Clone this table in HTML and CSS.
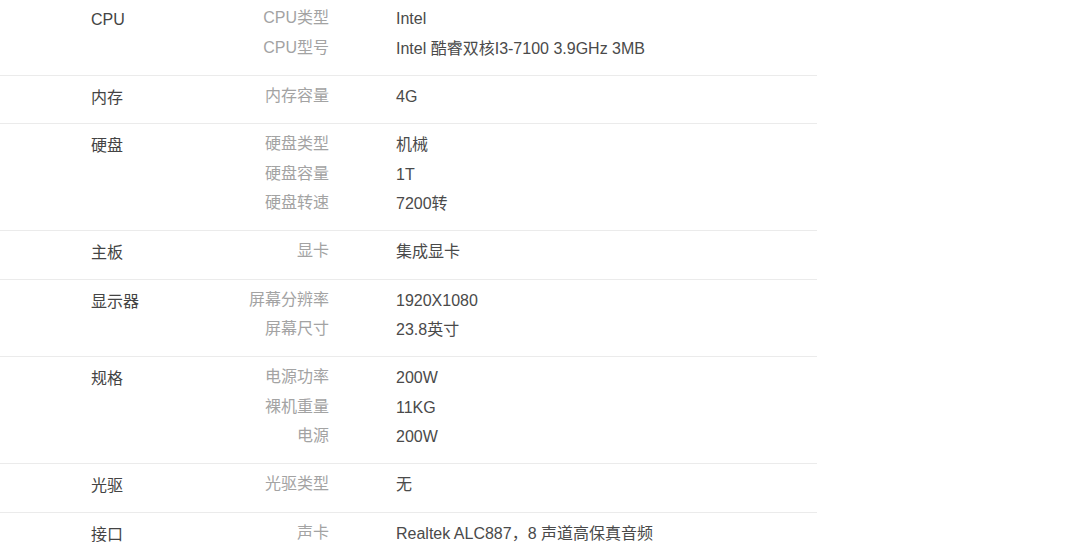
FILE: index.html
```html
<!DOCTYPE html>
<html lang="zh-CN">
<head>
<meta charset="utf-8">
<title>规格参数</title>
<link rel="stylesheet" href="styles.css">
</head>
<body>
<div class="specs">
  <section class="group">
    <div class="name">CPU</div>
    <div class="label">CPU类型</div><div class="value">Intel</div>
    <div class="label">CPU型号</div><div class="value">Intel 酷睿双核I3-7100 3.9GHz 3MB</div>
  </section>
  <section class="group">
    <div class="name">内存</div>
    <div class="label">内存容量</div><div class="value">4G</div>
  </section>
  <section class="group">
    <div class="name">硬盘</div>
    <div class="label">硬盘类型</div><div class="value">机械</div>
    <div class="label">硬盘容量</div><div class="value">1T</div>
    <div class="label">硬盘转速</div><div class="value">7200转</div>
  </section>
  <section class="group">
    <div class="name">主板</div>
    <div class="label">显卡</div><div class="value">集成显卡</div>
  </section>
  <section class="group">
    <div class="name">显示器</div>
    <div class="label">屏幕分辨率</div><div class="value">1920X1080</div>
    <div class="label">屏幕尺寸</div><div class="value">23.8英寸</div>
  </section>
  <section class="group">
    <div class="name">规格</div>
    <div class="label">电源功率</div><div class="value">200W</div>
    <div class="label">裸机重量</div><div class="value">11KG</div>
    <div class="label">电源</div><div class="value">200W</div>
  </section>
  <section class="group">
    <div class="name">光驱</div>
    <div class="label">光驱类型</div><div class="value">无</div>
  </section>
  <section class="group">
    <div class="name">接口</div>
    <div class="label">声卡</div><div class="value">Realtek ALC887，8 声道高保真音频</div>
  </section>
</div>
</body>
</html>
```

FILE: styles.css
```css
html, body {
  margin: 0;
  padding: 0;
  background: #fff;
}

body {
  font-family: "Liberation Sans", "Noto Sans CJK SC", sans-serif;
  font-size: 16px;
  color: #444;
}

.specs {
  width: 817px;
  margin-top: -1.7px;
}

.group {
  display: grid;
  grid-template-columns: 150px 88px auto;
  grid-auto-rows: 29.3px;
  padding: 6px 0 12.1px 91px;
  border-bottom: 1px solid #ebebeb;
  line-height: 29.3px;
}

.name {
  grid-column: 1;
  grid-row: 1;
  margin-top: 1px;
  color: #444;
  white-space: nowrap;
}

.label {
  grid-column: 2;
  text-align: right;
  color: #a3a3a3;
  white-space: nowrap;
  margin-top: -1px;
}

.value {
  grid-column: 3;
  padding-left: 67px;
  color: #4a4a4a;
  white-space: nowrap;
}
```
